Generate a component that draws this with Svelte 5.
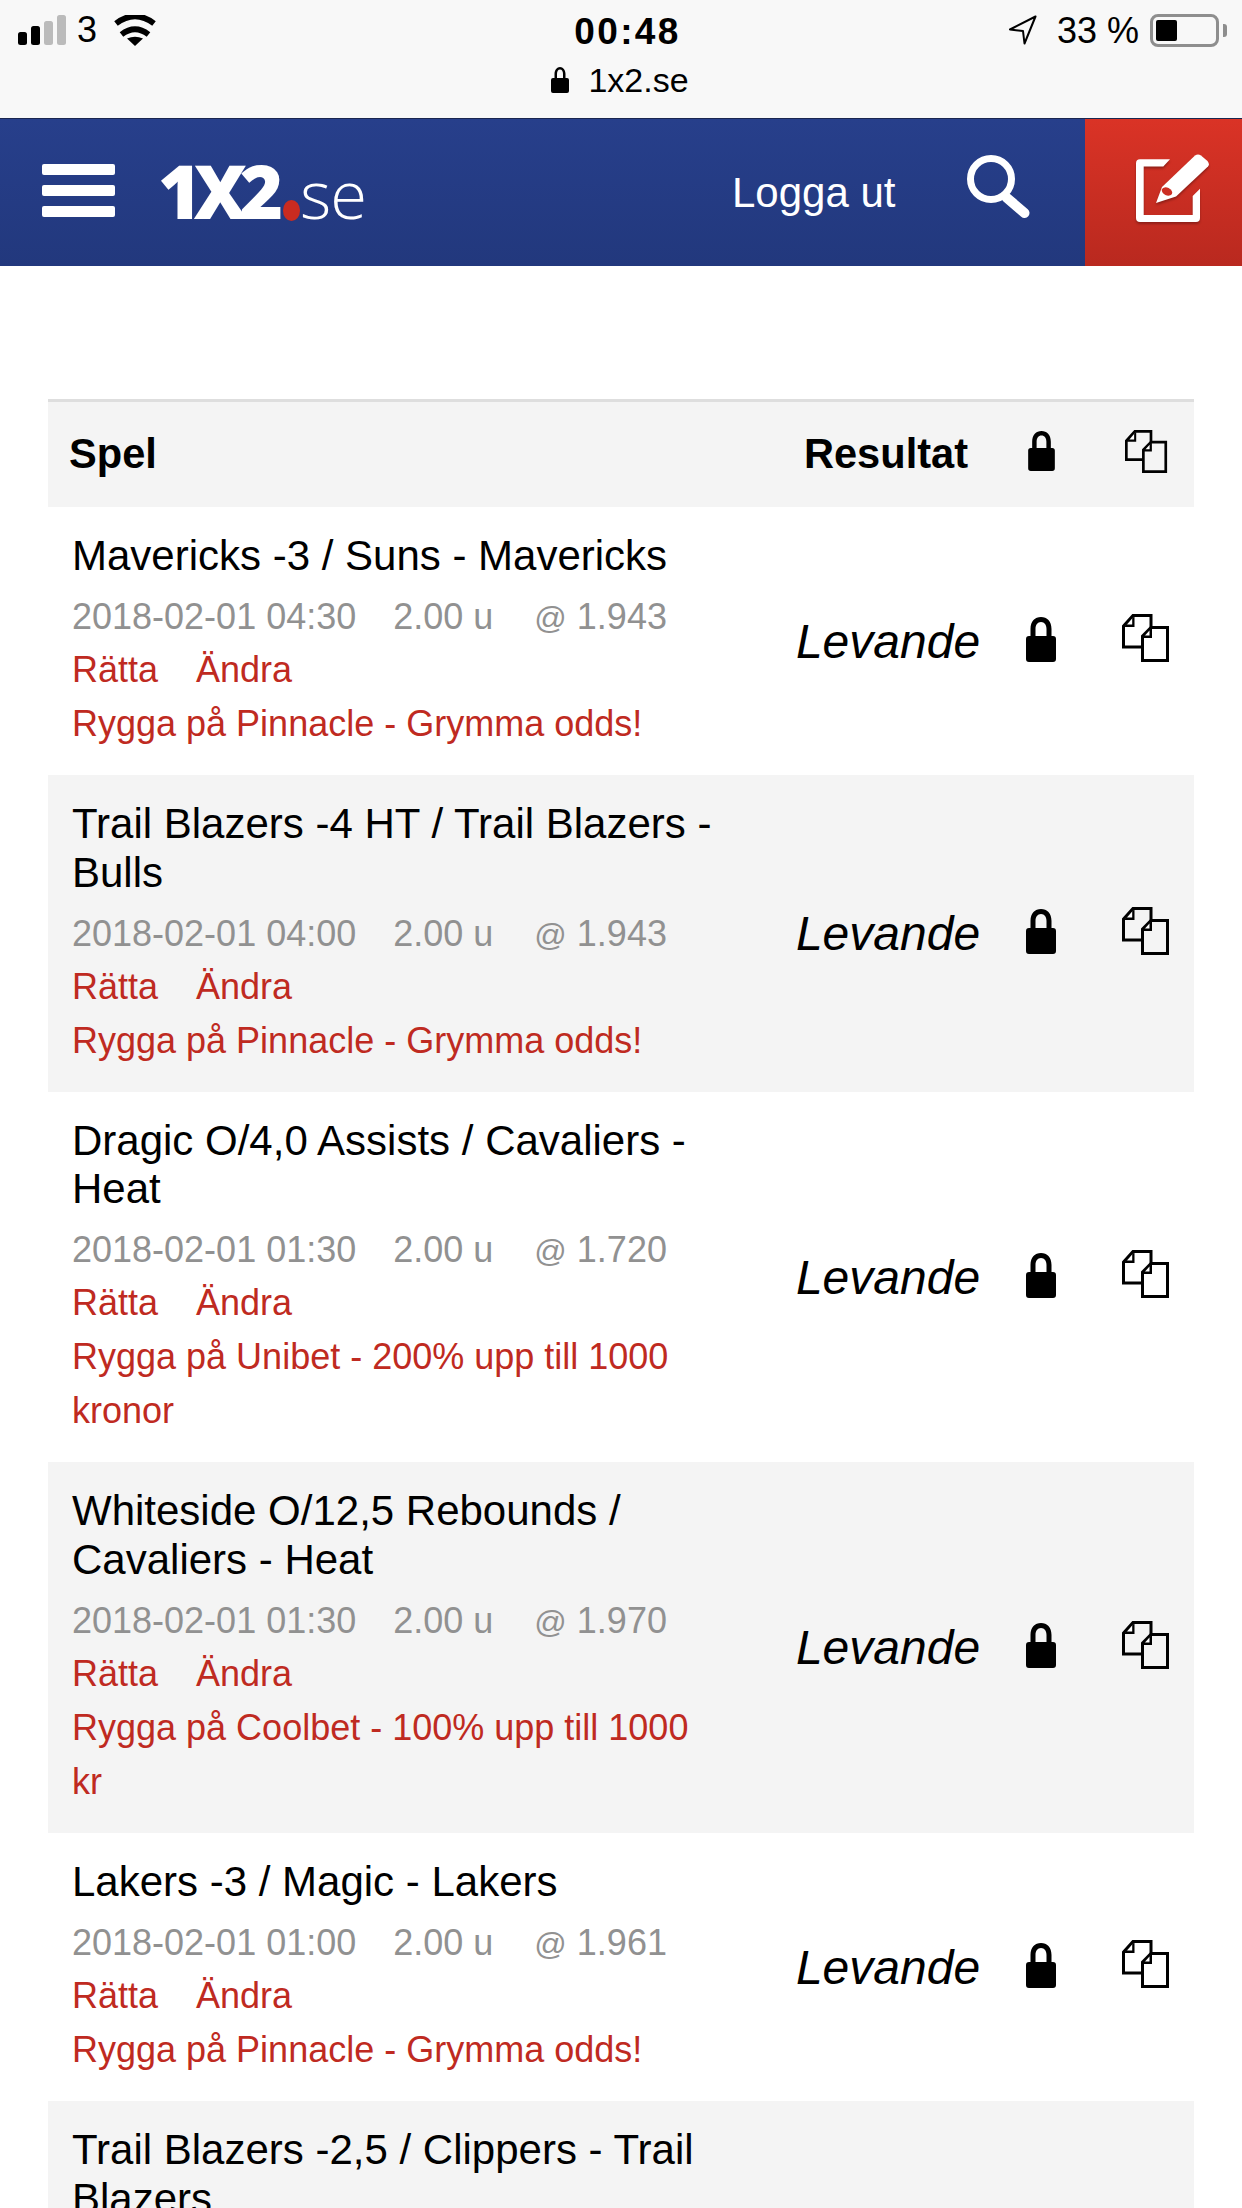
<script>
  const rows = [
    { title: 'Mavericks -3 / Suns - Mavericks', date: '2018-02-01 04:30', odds: '1.943', promo: 'Rygga på Pinnacle - Grymma odds!' },
    { title: 'Trail Blazers -4 HT / Trail Blazers - Bulls', date: '2018-02-01 04:00', odds: '1.943', promo: 'Rygga på Pinnacle - Grymma odds!' },
    { title: 'Dragic O/4,0 Assists / Cavaliers - Heat', date: '2018-02-01 01:30', odds: '1.720', promo: 'Rygga på Unibet - 200% upp till 1000 kronor' },
    { title: 'Whiteside O/12,5 Rebounds / Cavaliers - Heat', date: '2018-02-01 01:30', odds: '1.970', promo: 'Rygga på Coolbet - 100% upp till 1000 kr' },
    { title: 'Lakers -3 / Magic - Lakers', date: '2018-02-01 01:00', odds: '1.961', promo: 'Rygga på Pinnacle - Grymma odds!' },
    { title: 'Trail Blazers -2,5 / Clippers - Trail Blazers', date: '2018-02-01 01:00', odds: '1.943', promo: 'Rygga på Pinnacle - Grymma odds!' }
  ];
</script>

{#snippet lock(cls)}
  <svg class={cls} viewBox="0 0 30 45"><path d="M0 22a3 3 0 0 1 3-3h1.500v-7C4.500 4 9 0 15 0s10.500 4 10.500 12v7H27a3 3 0 0 1 3 3v20a3 3 0 0 1-3 3H3a3 3 0 0 1-3-3z M9.500 19h11v-7c0-4-2-7-5.500-7s-5.500 3-5.500 7z" fill="#000" fill-rule="evenodd"/></svg>
{/snippet}

{#snippet copy(cls)}
  <svg class={cls} viewBox="0 0 48 48"><g fill="none" stroke="#000" stroke-width="3"><path d="M29 14V1.500H11L1.500 12V33H20"/><path d="M29 13.500H45.500V46.500H20.500V22z"/></g><path d="M12.500 2V13H2zM30 14V24H20z" fill="#000"/><path d="M10.200 4.500V10.500H5zM27.500 16.500V21.500H23z" fill="#fff"/></svg>
{/snippet}

<div class="page">
  <header class="status">
    <div class="side left">
      <span class="bars"><i class="on b1"></i><i class="on b2"></i><i class="b3"></i><i class="b4"></i></span>
      <span class="carrier">3</span>
      <svg class="wifi" viewBox="0 0 42 31"><g fill="none" stroke="#000"><path d="M2 8.500Q21 -6 40 8.500" stroke-width="5.800"/><path d="M7.500 19.500Q21 9 34.500 19.500" stroke-width="5.800"/></g><path d="M21 31L13 23.500Q21 20 29 23.500z" fill="#000"/></svg>
    </div>
    <div class="center">
      <div class="time">00:48</div>
      <div class="url">
        <svg class="urllock" viewBox="0 0 18 26"><path d="M0 13a2 2 0 0 1 2-2h1.500V7c0-4 2.500-7 5.500-7s5.500 3 5.500 7v4H16a2 2 0 0 1 2 2v11a2 2 0 0 1-2 2H2a2 2 0 0 1-2-2z M6 11h6V7c0-2.500-1-4.500-3-4.500S6 4.500 6 7z" fill="#000" fill-rule="evenodd"/></svg>
        <span>1x2.se</span>
      </div>
    </div>
    <div class="side right">
      <svg class="loc" viewBox="0 0 29 30"><path d="M27.500 1.500L2 14.500l13 1.500 1.500 12.500z" fill="none" stroke="#000" stroke-width="2" stroke-linejoin="round"/></svg>
      <span class="pct">33 %</span>
      <span class="battery"><span class="level"></span></span>
      <span class="nub"></span>
    </div>
  </header>

  <nav class="nav">
    <div class="menu"><i></i><i></i><i></i></div>
    <div class="logo"><b>1X2</b><span class="dot"></span><span class="se">se</span></div>
    <div class="logout">Logga ut</div>
    <svg class="search" viewBox="0 0 63 63"><circle cx="24" cy="24" r="20.500" fill="none" stroke="#fff" stroke-width="7"/><path d="M40 43L57.500 58" stroke="#fff" stroke-width="10" stroke-linecap="round"/></svg>
    <div class="edit">
      <svg viewBox="0 0 90 85"><g class="editg"><path d="M44 13.300H14Q10 13.300 10 17.300V72Q10 76 14 76H70Q74 76 74 72V42.700L66.700 50V69H17.700V20.500H37.300z" fill="#fff"/><path d="M69 9.500Q72 7.500 75 9.500L81.500 15Q84 18 82 20.500L50 50.500L30 57L36 41z" fill="#fff"/></g><ellipse cx="41" cy="45.500" rx="5.500" ry="3.800" transform="rotate(25 41 45.500)" fill="#cc2e23"/></svg>
    </div>
  </nav>

  <main class="main">
    <div class="row head">
      <div class="game">Spel</div>
      <div class="res">Resultat</div>
      <div class="ic">{@render lock('lock small')}</div>
      <div class="ic cp">{@render copy('copy small')}</div>
    </div>
    {#each rows as r, i}
      <div class="row item" class:alt={i % 2 === 1}>
        <div class="info">
          <div class="title">{r.title}</div>
          <div class="meta"><span>{r.date}</span><span class="units">2.00 u</span><span class="odds"><small>@</small> {r.odds}</span></div>
          <div class="links"><span>Rätta</span><span>Ändra</span></div>
          <div class="promo">{r.promo}</div>
        </div>
        <div class="status-cell">Levande</div>
        <div class="ic">{@render lock('lock')}</div>
        <div class="ic cp">{@render copy('copy')}</div>
      </div>
    {/each}
  </main>
</div>

<style>
  :global(body) { margin: 0; background: #fff; }
  .page { width: 1242px; height: 2208px; overflow: hidden; font-family: "Liberation Sans", Arial, sans-serif; color: #000; }

  .status { height: 118px; background: #f8f8f8; border-bottom: 1px solid #1a2650; display: flex; align-items: flex-start; }
  .side { flex: 1 1 0; display: flex; align-items: center; height: 60px; }
  .left { padding-left: 18px; }
  .right { justify-content: flex-end; padding-right: 15px; }
  .bars { display: flex; align-items: flex-end; gap: 4px; height: 30px; }
  .bars i { width: 9px; background: #bbb; border-radius: 2.500px; }
  .bars .on { background: #000; }
  .b1 { height: 13px; } .b2 { height: 19px; } .b3 { height: 24px; } .b4 { height: 30px; }
  .carrier { font-size: 36px; margin-left: 11px; }
  .wifi { width: 42px; height: 31px; margin-left: 17px; }
  .center { display: flex; flex-direction: column; align-items: center; }
  .time { font-size: 37px; font-weight: 700; line-height: 40px; margin: 12px 0 0 10px; letter-spacing: 2.400px; }
  .url { display: flex; align-items: center; gap: 19px; font-size: 34px; line-height: 40px; margin: 8px 5px 0 0; }
  .urllock { width: 18px; height: 26px; }
  .loc { width: 29px; height: 30px; margin-right: 20px; }
  .pct { font-size: 36px; margin: 2px 11px 0 0; }
  .battery { width: 69px; height: 33px; border: 3px solid #8e8e8e; border-radius: 8px; box-sizing: border-box; padding: 3px; display: flex; }
  .level { width: 21px; background: #000; border-radius: 2px; }
  .nub { width: 4px; height: 13px; background: #8e8e8e; border-radius: 0 3px 3px 0; margin-left: 4px; }

  .nav { height: 147px; background: linear-gradient(#273f8b, #22387d); display: flex; align-items: center; color: #fff; }
  .menu { display: flex; flex-direction: column; gap: 10px; margin: -5px 0 0 42px; width: 73px; flex: none; }
  .menu i { height: 11px; background: #fff; border-radius: 2px; }
  .logo { margin: -4px 0 0 45px; display: flex; align-items: baseline; width: 206px; flex: none; height: 74px; line-height: 74px; }
  .logo b { font-family: "Open Sans", sans-serif; font-weight: 800; font-size: 74px; letter-spacing: -7.500px; margin-left: -2px; }
  .dot { width: 21px; height: 21px; border-radius: 50%; background: #c92b20; margin: 0 0 -5px 7px; transform: translateY(2px); }
  .se { font-family: "Open Sans", sans-serif; font-weight: 300; font-size: 67px; margin-left: 0; letter-spacing: -1px; }
  .logout { font-size: 42px; margin: 0 0 0 366px; width: 162px; flex: none; white-space: nowrap; }
  .search { width: 63px; height: 63px; flex: none; margin: -13px 0 0 73px; }
  .edit { margin-left: 55px; flex: 1; align-self: stretch; background: linear-gradient(#da3326, #b9291f); display: flex; align-items: center; padding-left: 41px; }
  .edit svg { width: 90px; height: 85px; flex: none; margin-top: -9px; }
  .editg { filter: drop-shadow(0 2px 1px #8f1f18); }

  .main { margin: 133px 48px 0; }
  .row { display: grid; grid-template-columns: 732px 216px 90px 108px; align-items: center; }
  .head { height: 105px; background: #f4f4f4; border-top: 3px solid #dedede; font-size: 41.600px; font-weight: 700; }
  .head .game, .head .res { margin-top: -2px; }
  .head .ic { margin-top: -7px; }
  .game { padding-left: 21px; }
  .res { text-align: center; padding-right: 4px; }
  .ic { display: flex; justify-content: center; margin-top: -4px; }
  .cp { padding-left: 12px; margin-top: -6px; }
  .lock { width: 30px; height: 45px; }
  .lock.small { width: 27px; height: 40px; }
  .copy { width: 48px; height: 48px; }
  .copy.small { width: 43px; height: 43px; }

  .item { background: #fff; }
  .item.alt { background: #f4f4f4; }
  .info { padding: 25px 0 24px 24px; width: 645px; }
  .title { font-size: 42px; line-height: 48.300px; margin-bottom: 11px; }
  .meta, .links, .promo { font-size: 36px; line-height: 54px; }
  .meta { color: #919191; display: flex; line-height: 52px; }
  .units { margin-left: 37px; }
  .odds { margin-left: 41px; }
  .odds small { font-size: 32px; line-height: 0; }
  .links { color: #bf2a21; display: flex; gap: 38px; }
  .promo { color: #bf2a21; }
  .status-cell { font-size: 48px; font-style: italic; text-align: center; }
</style>
